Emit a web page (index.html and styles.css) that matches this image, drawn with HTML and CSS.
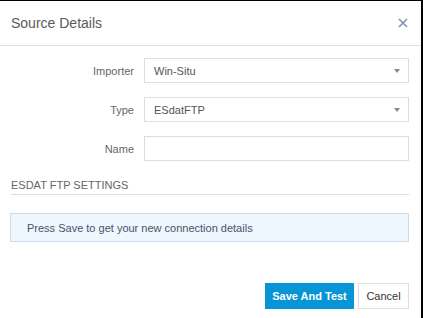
FILE: index.html
```html
<!DOCTYPE html>
<html lang="en">
<head>
    <meta charset="UTF-8">
    <title>Source Details</title>
    <link rel="stylesheet" href="styles.css">
</head>
<body>
    <div class="modal">
        <div class="modal-header">
            <h1 class="modal-title">Source Details</h1>
            <button class="close-btn" aria-label="Close">
                <svg width="10" height="10" viewBox="0 0 10 10">
                    <path d="M1 1 L9 9 M9 1 L1 9" stroke="#7f93a8" stroke-width="1.6" fill="none"/>
                </svg>
            </button>
        </div>

        <div class="modal-body">
            <div class="form-row">
                <label class="form-label">Importer</label>
                <div class="select-box">
                    <span>Win-Situ</span>
                    <span class="caret"></span>
                </div>
            </div>
            <div class="form-row">
                <label class="form-label">Type</label>
                <div class="select-box">
                    <span>ESdatFTP</span>
                    <span class="caret"></span>
                </div>
            </div>
            <div class="form-row">
                <label class="form-label">Name</label>
                <div class="text-input"></div>
            </div>

            <h2 class="section-title">ESDAT FTP SETTINGS</h2>

            <div class="info-box">Press Save to get your new connection details</div>
        </div>

        <div class="modal-footer">
            <button class="btn btn-primary">Save And Test</button>
            <button class="btn btn-default">Cancel</button>
        </div>
    </div>
</body>
</html>
```

FILE: styles.css
```css
* {
    margin: 0;
    padding: 0;
    box-sizing: border-box;
}

body {
    font-family: "Liberation Sans", Arial, sans-serif;
    background: #000;
    padding-top: 1px;
}

.modal {
    width: 421px;
    height: 317px;
    background: #fff;
    display: flex;
    flex-direction: column;
}

.modal-header {
    height: 45px;
    border-bottom: 1px solid #e0e0e0;
    display: flex;
    align-items: center;
    justify-content: space-between;
    padding: 0 13px 0 11px;
}

.modal-title {
    font-size: 14px;
    font-weight: normal;
    color: #5a5a5a;
}

.close-btn {
    background: none;
    border: none;
    display: flex;
    cursor: pointer;
}

.modal-body {
    padding: 12px 12px 0 11px;
    flex: 1;
}

.form-row {
    display: grid;
    grid-template-columns: 123px 1fr;
    column-gap: 10px;
    align-items: center;
    margin-bottom: 14px;
}

.form-label {
    text-align: right;
    font-size: 11px;
    color: #666;
}

.select-box, .text-input {
    height: 25px;
    border: 1px solid #ddd;
    display: flex;
    align-items: center;
    justify-content: space-between;
    padding: 0 8px 0 9px;
    font-size: 11px;
    color: #555;
}

.caret {
    width: 0;
    height: 0;
    border-left: 3.5px solid transparent;
    border-right: 3.5px solid transparent;
    border-top: 4px solid #888;
}

.section-title {
    font-size: 11px;
    font-weight: normal;
    color: #666;
    margin-top: 18px;
    padding-bottom: 3px;
    border-bottom: 1px solid #ddd;
}

.info-box {
    margin-top: 18px;
    margin-left: -1px;
    height: 29px;
    display: flex;
    align-items: center;
    padding-left: 16px;
    background: #eef6fe;
    border: 1px solid #cddcea;
    font-size: 11px;
    color: #4a5468;
}

.modal-footer {
    display: flex;
    justify-content: flex-end;
    gap: 4px;
    padding: 0 12px 9px 0;
}

.btn {
    height: 26px;
    font-family: "Liberation Sans", Arial, sans-serif;
    font-size: 11px;
    cursor: pointer;
}

.btn-primary {
    width: 89px;
    background: #0795d6;
    color: #fff;
    font-weight: bold;
    border: none;
}

.btn-default {
    width: 51px;
    background: #fff;
    color: #333;
    border: 1px solid #ddd;
}
```
